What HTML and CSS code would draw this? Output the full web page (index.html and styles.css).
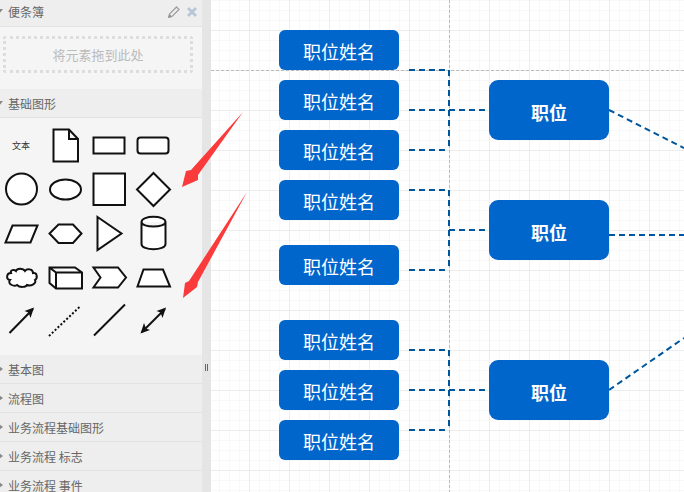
FILE: index.html
```html
<!DOCTYPE html>
<html lang="zh-CN">
<head>
    <meta charset="UTF-8">
    <title>流程图编辑器</title>
    <link rel="stylesheet" href="styles.css">
</head>
<body>
    <div class="app-container">

        <div class="sidebar">
            <div class="panel-title panel-open scratch-title">
                <span>便条簿</span>
                <div class="title-icons">
                    <svg class="pencil-icon" viewBox="0 0 12 12">
                        <path d="M0.5 11.5 L1.5 8 L8.5 1 L11 3.5 L4 10.5 Z" fill="none" stroke="#a0a0a0" stroke-width="1.3"/>
                        <path d="M0.5 11.5 L1.5 8 L4 10.5 Z" fill="#909090"/>
                    </svg>
                    <svg class="close-icon" viewBox="0 0 10 10">
                        <path d="M1 1 L9 9 M9 1 L1 9" stroke="#b7c6d6" stroke-width="2.6"/>
                    </svg>
                </div>
            </div>
            <div class="scratch-area">
                <div class="scratch-box">将元素拖到此处</div>
            </div>

            <div class="panel-title panel-open">基础图形</div>
            <div class="shape-grid">
                <div class="shape-text">文本</div>
                <svg class="shape" viewBox="0 0 44 44"><path d="M9.5 6.5 H25 L34 16 V38.5 H9.5 Z M25 6.5 V16 H34"/></svg>
                <svg class="shape" viewBox="0 0 44 44"><rect x="5.5" y="14.5" width="31" height="16"/></svg>
                <svg class="shape" viewBox="0 0 44 44"><rect x="5.5" y="14.5" width="31" height="16" rx="3"/></svg>

                <svg class="shape" viewBox="0 0 44 44"><circle cx="21.5" cy="22" r="15.5"/></svg>
                <svg class="shape" viewBox="0 0 44 44"><ellipse cx="21.5" cy="22.5" rx="15.5" ry="10"/></svg>
                <svg class="shape" viewBox="0 0 44 44"><rect x="5.5" y="6.5" width="31.5" height="31.5"/></svg>
                <svg class="shape" viewBox="0 0 44 44"><path d="M21.5 6 L38 22.5 L21.5 39 L5 22.5 Z"/></svg>

                <svg class="shape" viewBox="0 0 44 44"><path d="M12.5 14.5 H37.5 L30.5 31.5 H5.5 Z"/></svg>
                <svg class="shape" viewBox="0 0 44 44"><path d="M14.5 13.5 H29 L37.5 22.5 L29 32 H14.5 L5.5 22.5 Z"/></svg>
                <svg class="shape" viewBox="0 0 44 44"><path d="M9.5 6 L33.5 22.5 L9.5 39 Z"/></svg>
                <svg class="shape" viewBox="0 0 44 44"><path d="M9.5 11 C9.5 4 33.5 4 33.5 11 V33 C33.5 40 9.5 40 9.5 33 Z M9.5 11 C9.5 17 33.5 17 33.5 11"/></svg>

                <svg class="shape" viewBox="0 0 44 44"><path d="M11 18 C6 18 6 25 10 25 C7 29 14 32 17 30 C20 33 26 32 27 30 C31 32 37 28 35 25 C38 23 37 17 33 18 C33 14 27 13 25 16 C23 13 17 13 16 16 C14 14 10 15 11 18 Z"/></svg>
                <svg class="shape" viewBox="0 0 44 44"><path d="M5.5 12.5 H31 L38 17.5 V33.5 H12 L5.5 28 Z M5.5 12.5 L12 17.5 H38 M12 17.5 V33.5"/></svg>
                <svg class="shape" viewBox="0 0 44 44"><path d="M5.5 12.5 H30 L38 22.5 L30 32.5 H5.5 L12.5 22.5 Z"/></svg>
                <svg class="shape" viewBox="0 0 44 44"><path d="M11.5 14.5 H31 L38 31.5 H5.5 Z"/></svg>

                <svg class="shape" viewBox="0 0 44 44"><path d="M9.5 34 L33 10"/><path class="head" d="M34 8.5 L24.5 12 L28.5 13.5 L30.5 19 Z"/></svg>
                <svg class="shape" viewBox="0 0 44 44"><path class="dots" d="M5 37 L36 7.5"/></svg>
                <svg class="shape" viewBox="0 0 44 44"><path d="M6 36.5 L37 5.5"/></svg>
                <svg class="shape" viewBox="0 0 44 44"><path d="M10 33 L33 10"/><path class="head" d="M34 8.5 L24.5 12 L28.5 13.5 L30.5 19 Z"/><path class="head" d="M8.5 34.5 L18 31 L14 29.5 L12 24 Z"/></svg>
            </div>

            <div class="panel-title panel-closed">基本图</div>
            <div class="panel-title panel-closed">流程图</div>
            <div class="panel-title panel-closed">业务流程基础图形</div>
            <div class="panel-title panel-closed">业务流程 标志</div>
            <div class="panel-title panel-closed">业务流程 事件</div>
        </div>

        <div class="splitter"><div class="splitter-grip"></div></div>

        <div class="canvas">
            <svg class="wires" viewBox="0 0 473 492">
                <!-- page guides -->
                <path class="guide" d="M0 70.5 H473 M238.5 0 V492"/>
                <!-- group 1 -->
                <path class="wire" d="M198 70 H238 V150"/>
                <path class="wire" d="M198 150 H238"/>
                <path class="wire" d="M198 110 H278"/>
                <path class="wire" d="M398 110 L473 148"/>
                <!-- group 2 -->
                <path class="wire" d="M198 190 H238 V270"/>
                <path class="wire" d="M198 270 H238"/>
                <path class="wire" d="M238 230 H278"/>
                <path class="wire" d="M398 235 H473"/>
                <!-- group 3 -->
                <path class="wire" d="M198 350 H238 V430"/>
                <path class="wire" d="M198 430 H238"/>
                <path class="wire" d="M198 390 H278"/>
                <path class="wire" d="M398 390 L473 338"/>
            </svg>

            <div class="name-node row-1">职位姓名</div>
            <div class="name-node row-2">职位姓名</div>
            <div class="name-node row-3">职位姓名</div>
            <div class="name-node row-4">职位姓名</div>
            <div class="name-node row-5">职位姓名</div>
            <div class="name-node row-6">职位姓名</div>
            <div class="name-node row-7">职位姓名</div>
            <div class="name-node row-8">职位姓名</div>

            <div class="job-node job-1">职位</div>
            <div class="job-node job-2">职位</div>
            <div class="job-node job-3">职位</div>
        </div>
    </div>

    <svg class="red-arrows" viewBox="0 0 684 492">
        <path d="M243 112 L198 175 L198 180 L182 187 L186 171 L191 170 Z"/>
        <path d="M247 192 L198 282 L197 287 L183 298 L185 283 L189 281 Z"/>
    </svg>
</body>
</html>
```
FILE: styles.css
```css
body {
    margin: 0;
    font-family: "Noto Sans CJK SC", "Liberation Sans", sans-serif;
    overflow: hidden;
}

.app-container {
    display: flex;
    width: 684px;
    height: 492px;
    overflow: hidden;
}

/* left panel */
.sidebar {
    width: 202px;
    height: 492px;
    overflow: hidden;
    flex-shrink: 0;
    background-color: #f5f5f5;
}

.panel-title {
    display: flex;
    align-items: center;
    height: 29px;
    box-sizing: border-box;
    font-size: 12px;
    color: #666;
    background-color: #eee;
    border-bottom: 1px solid #e2e2e2;
}

.scratch-title {
    height: 27px;
    padding-right: 5px;
    padding-bottom: 3px;
}

.panel-title::before {
    content: "";
    width: 0;
    height: 0;
    flex-shrink: 0;
}

.panel-open::before {
    margin: 0 5px 0 -5px;
    border-left: 4px solid transparent;
    border-right: 4px solid transparent;
    border-top: 5px solid #888;
}

.panel-closed::before {
    margin: 0 5px 0 -1px;
    border-top: 3px solid transparent;
    border-bottom: 3px solid transparent;
    border-left: 4px solid #888;
}

.title-icons {
    display: flex;
    align-items: center;
    gap: 7px;
    margin-left: auto;
}

.pencil-icon {
    width: 12px;
    height: 12px;
}

.close-icon {
    width: 10px;
    height: 10px;
}

.scratch-area {
    height: 62px;
    box-sizing: border-box;
    padding: 9px 9px 0 3px;
}

.scratch-box {
    height: 37px;
    box-sizing: border-box;
    display: flex;
    align-items: center;
    justify-content: center;
    border: 3px dotted #ddd;
    border-radius: 3px;
    font-size: 13px;
    color: #bbb;
}

.shape-grid {
    display: grid;
    grid-template-columns: repeat(4, 44px);
    grid-auto-rows: 44px;
    height: 237px;
    box-sizing: border-box;
    padding-top: 5px;
}

.shape {
    width: 44px;
    height: 44px;
    fill: #fff;
    stroke: #111;
    stroke-width: 2;
}

.shape .head {
    fill: #111;
    stroke: none;
}

.shape .dots {
    stroke-width: 2;
    stroke-dasharray: 2 2;
}

.shape-text {
    display: flex;
    align-items: center;
    justify-content: center;
    width: 42px;
    font-size: 9px;
    color: #333;
}

/* splitter */
.splitter {
    display: flex;
    align-items: center;
    justify-content: center;
    width: 9px;
    flex-shrink: 0;
    background-color: #e5e5e5;
}

.splitter-grip {
    width: 1px;
    height: 7px;
    margin-top: 243px;
    margin-left: -1px;
    border-left: 1px solid #666;
    border-right: 1px solid #666;
}

/* drawing area */
.canvas {
    position: relative;
    flex: 1;
    background-color: #fff;
    background-image:
        linear-gradient(to right, #ececec 1px, transparent 1px),
        linear-gradient(to bottom, #ececec 1px, transparent 1px),
        linear-gradient(to right, #f8f8f8 1px, transparent 1px),
        linear-gradient(to bottom, #f8f8f8 1px, transparent 1px);
    background-size: 40px 40px, 40px 40px, 10px 10px, 10px 10px;
    background-position: 38px 0, 0 30px, 8px 0, 0 0;
}

.wires {
    position: absolute;
    left: 0;
    top: 0;
    width: 473px;
    height: 492px;
    fill: none;
}

.guide {
    stroke: #bbb;
    stroke-width: 1;
    stroke-dasharray: 3 2;
}

.wire {
    stroke: #00569c;
    stroke-width: 2;
    stroke-dasharray: 6 4;
}

.name-node,
.job-node {
    position: absolute;
    display: flex;
    align-items: center;
    justify-content: center;
    width: 120px;
    box-sizing: border-box;
    background-color: #0066cc;
    color: #fff;
    font-size: 18px;
}

.name-node {
    left: 68px;
    height: 40px;
    padding-top: 2px;
    border-radius: 6px;
}

.job-node {
    left: 278px;
    height: 60px;
    padding-top: 4px;
    border-radius: 9px;
    font-weight: 700;
}

.row-1 { top: 30px; }
.row-2 { top: 80px; }
.row-3 { top: 130px; }
.row-4 { top: 180px; }
.row-5 { top: 245px; }
.row-6 { top: 320px; }
.row-7 { top: 370px; }
.row-8 { top: 420px; }

.job-1 { top: 80px; }
.job-2 { top: 200px; }
.job-3 { top: 360px; }

/* annotation arrows */
.red-arrows {
    position: absolute;
    left: 0;
    top: 0;
    width: 684px;
    height: 492px;
    fill: #fb3b3b;
    pointer-events: none;
}
```
